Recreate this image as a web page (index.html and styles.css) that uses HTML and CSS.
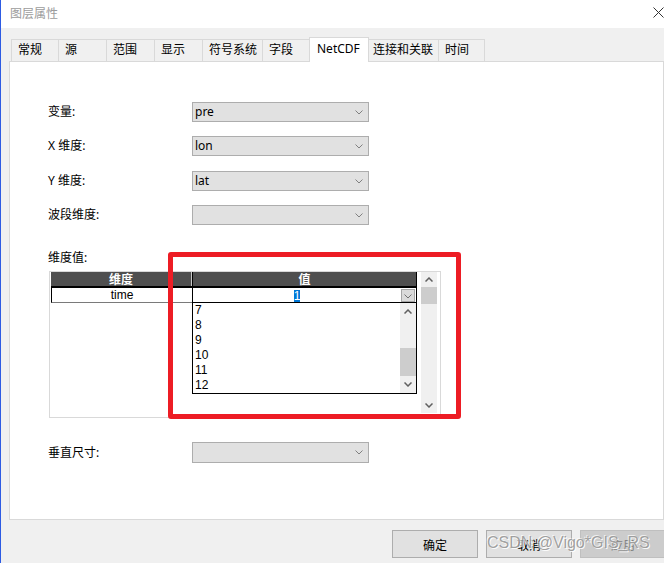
FILE: index.html
```html
<!DOCTYPE html>
<html lang="zh-CN">
<head>
<meta charset="utf-8">
<title>图层属性</title>
<link rel="stylesheet" href="styles.css">
</head>
<body>
<div class="window">
  <div class="titlebar">
    <span class="title">图层属性</span>
    <svg class="close" viewBox="0 0 12 11" width="12" height="11"><path d="M0.5 0.5 L10.5 10.5 M10.5 0.5 L0.5 10.5" stroke="#333" stroke-width="1" fill="none"/></svg>
  </div>

  <div class="tabs">
    <div class="tab tab-first w48">常规</div>
    <div class="tab w49">源</div>
    <div class="tab w49">范围</div>
    <div class="tab w49">显示</div>
    <div class="tab w61">符号系统</div>
    <div class="tab w48">字段</div>
    <div class="tab tab-active w60">NetCDF</div>
    <div class="tab tab-tight w71">连接和关联</div>
    <div class="tab w47">时间</div>
  </div>

  <div class="panel">
    <div class="row">
      <label class="lbl">变量:</label>
      <div class="select"><span class="val">pre</span><svg class="chev" viewBox="0 0 8 5" width="8" height="5"><polyline points="0.5,0.5 4,4 7.5,0.5" fill="none" stroke="#808080" stroke-width="1"/></svg></div>
    </div>
    <div class="row row-wide">
      <label class="lbl">X 维度:</label>
      <div class="select"><span class="val">lon</span><svg class="chev" viewBox="0 0 8 5" width="8" height="5"><polyline points="0.5,0.5 4,4 7.5,0.5" fill="none" stroke="#808080" stroke-width="1"/></svg></div>
    </div>
    <div class="row">
      <label class="lbl">Y 维度:</label>
      <div class="select"><span class="val">lat</span><svg class="chev" viewBox="0 0 8 5" width="8" height="5"><polyline points="0.5,0.5 4,4 7.5,0.5" fill="none" stroke="#808080" stroke-width="1"/></svg></div>
    </div>
    <div class="row">
      <label class="lbl">波段维度:</label>
      <div class="select"><span class="val"></span><svg class="chev" viewBox="0 0 8 5" width="8" height="5"><polyline points="0.5,0.5 4,4 7.5,0.5" fill="none" stroke="#808080" stroke-width="1"/></svg></div>
    </div>

    <div class="dimlabel">维度值:</div>
    <div class="dimbox">
      <div class="grid">
        <div class="head">
          <div class="hc1">维度</div>
          <div class="hc2">值</div>
        </div>
        <div class="hline"></div>
        <div class="datarow">
          <div class="dc1">time</div>
          <div class="dc2">
            <span class="cellval"><span class="hl">1</span></span>
            <span class="ddbtn"><svg viewBox="0 0 8 5" width="8" height="5"><polyline points="0.5,0.5 4,4 7.5,0.5" fill="none" stroke="#707070" stroke-width="1"/></svg></span>
          </div>
        </div>
      </div>
      <div class="vscroll">
        <div class="sarrow"><svg viewBox="0 0 8 5" width="8" height="5"><polyline points="0.5,4.5 4,1 7.5,4.5" fill="none" stroke="#606060" stroke-width="1.5"/></svg></div>
        <div class="sthumb outer-thumb"></div>
        <div class="strack"></div>
        <div class="sarrow"><svg viewBox="0 0 8 5" width="8" height="5"><polyline points="0.5,0.5 4,4 7.5,0.5" fill="none" stroke="#606060" stroke-width="1.5"/></svg></div>
      </div>

      <div class="dropdown">
        <ul class="items">
          <li>7</li>
          <li>8</li>
          <li>9</li>
          <li>10</li>
          <li>11</li>
          <li>12</li>
        </ul>
        <div class="lscroll">
          <div class="larrow"><svg viewBox="0 0 8 5" width="8" height="5"><polyline points="0.5,4.5 4,1 7.5,4.5" fill="none" stroke="#606060" stroke-width="1.5"/></svg></div>
          <div class="ltrack"><div class="lthumb"></div></div>
          <div class="larrow"><svg viewBox="0 0 8 5" width="8" height="5"><polyline points="0.5,0.5 4,4 7.5,0.5" fill="none" stroke="#606060" stroke-width="1.5"/></svg></div>
        </div>
      </div>
    </div>

    <div class="row row-vert">
      <label class="lbl">垂直尺寸:</label>
      <div class="select"><span class="val"></span><svg class="chev" viewBox="0 0 8 5" width="8" height="5"><polyline points="0.5,0.5 4,4 7.5,0.5" fill="none" stroke="#808080" stroke-width="1"/></svg></div>
    </div>
  </div>

  <div class="buttons">
    <button class="btn">确定</button>
    <button class="btn">取消</button>
    <button class="btn btn-disabled">应用</button>
  </div>

  <div class="watermark">CSDN @Vigo*GIS_RS</div>
  <div class="annot"></div>
</div>
</body>
</html>
```

FILE: styles.css
```css
html, body {
  margin: 0;
  padding: 0;
}
body {
  width: 664px;
  height: 563px;
  overflow: hidden;
  background: #f0f0f0;
  font-family: "Noto Sans", "Noto Sans CJK SC", sans-serif;
  font-size: 12px;
  color: #000;
}
.window {
  position: relative;
  height: 563px;
  border-left: 1px solid #2d5be3;
}

/* title bar */
.titlebar {
  height: 28px;
  background: #fff;
  display: flex;
  align-items: center;
  justify-content: space-between;
  padding-left: 9px;
}
.title {
  color: #9c9c9c;
  line-height: 16px;
}
.close {
  align-self: flex-start;
  margin-top: 7px;
  margin-right: -1px;
}

/* tabs */
.tabs {
  display: flex;
  align-items: flex-start;
  height: 25px;
  margin: 9px 0 -1px 10px;
}
.tab {
  box-sizing: border-box;
  height: 22px;
  margin-top: 2px;
  margin-left: -1px;
  border: 1px solid #d9d9d9;
  border-bottom: none;
  background: #f0f0f0;
  padding-left: 6px;
  line-height: 20px;
  white-space: nowrap;
}
.tab-first { margin-left: 0; }
.tab-tight { padding-left: 4px; }
.tab-active {
  position: relative;
  z-index: 1;
  height: 25px;
  margin-top: 0;
  background: #fff;
  padding-left: 7px;
  line-height: 22px;
}
.w47 { width: 47px; }
.w48 { width: 48px; }
.w49 { width: 49px; }
.w60 { width: 60px; }
.w61 { width: 61px; }
.w71 { width: 71px; }

/* panel */
.panel {
  box-sizing: border-box;
  width: 655px;
  height: 459px;
  margin-left: 8px;
  background: #fff;
  border: 1px solid #d9d9d9;
  padding: 40px 0 0 38px;
}
.row {
  display: flex;
  align-items: center;
  height: 20px;
  margin-bottom: 14px;
}
.row-wide {
  margin-bottom: 15px;
}
.lbl {
  width: 144px;
  line-height: 16px;
}
.select {
  box-sizing: border-box;
  width: 177px;
  height: 20px;
  background: #e1e1e1;
  border: 1px solid #adadad;
  display: flex;
  align-items: center;
  justify-content: space-between;
  padding: 0 5px 0 2px;
}
.val {
  line-height: 16px;
}
.chev {
  display: block;
}
.row-vert {
  margin-top: 24px;
  height: 21px;
}
.row-vert .select {
  height: 21px;
}

.dimlabel {
  margin-top: 25px;
  line-height: 16px;
}
.dimbox {
  position: relative;
  box-sizing: border-box;
  width: 392px;
  height: 147px;
  margin: 5px 0 0 1px;
  border: 1px solid #d9d9d9;
  padding-left: 1px;
  display: flex;
  align-items: flex-start;
}
.grid {
  width: 366px;
  font-family: "Liberation Sans", "Noto Sans CJK SC", sans-serif;
}
.head {
  display: flex;
  height: 14px;
  background: #4f4f4f;
  color: #fff;
  font-weight: bold;
  line-height: 14px;
  font-family: "Noto Sans CJK SC", sans-serif;
}
.hc1 {
  box-sizing: border-box;
  width: 141px;
  border-right: 1px solid #c8c8c8;
  text-align: center;
}
.hc2 {
  box-sizing: border-box;
  width: 225px;
  border-left: 1px solid #000;
  border-right: 1px solid #000;
  text-align: center;
}
.hline {
  height: 2px;
  background: #000;
}
.datarow {
  display: flex;
  height: 15px;
}
.dc1 {
  box-sizing: border-box;
  width: 141px;
  height: 15px;
  border-left: 1px solid #000;
  border-bottom: 1px solid #7a7a7a;
  text-align: center;
  line-height: 14px;
}
.dc2 {
  box-sizing: border-box;
  width: 225px;
  height: 15px;
  border-left: 1px solid #000;
  border-right: 1px solid #000;
  display: flex;
  align-items: flex-start;
}
.cellval {
  flex: 1;
  text-align: center;
  padding-top: 1px;
}
.hl {
  display: inline-block;
  background: #0078d7;
  color: #fff;
  line-height: 13px;
}
.ddbtn {
  box-sizing: border-box;
  width: 14px;
  height: 13px;
  margin: 1px 1px 0 0;
  background: #dadada;
  border: 1px solid #a6a6a6;
  display: flex;
  align-items: center;
  justify-content: center;
  padding-top: 2px;
}
.ddbtn svg { display: block; }

.vscroll {
  width: 16px;
  height: 141px;
  margin-left: 4px;
  background: #f0f0f0;
  display: flex;
  flex-direction: column;
}
.sarrow {
  height: 15px;
  display: flex;
  align-items: center;
  justify-content: center;
}
.sarrow svg, .larrow svg { display: block; }
.outer-thumb {
  height: 17px;
  background: #cdcdcd;
}
.strack { flex: 1; }

.dropdown {
  position: absolute;
  left: 142px;
  top: 30px;
  box-sizing: border-box;
  width: 225px;
  height: 92px;
  border: 1px solid #000;
  background: #fff;
  display: flex;
}
.items {
  flex: 1;
  list-style: none;
  margin: 0;
  padding: 0 0 0 2px;
  font-family: "Liberation Sans", sans-serif;
  font-size: 12px;
  line-height: 15px;
  color: #000;
}
.lscroll {
  width: 16px;
  background: #f0f0f0;
  display: flex;
  flex-direction: column;
}
.larrow {
  height: 17px;
  display: flex;
  align-items: center;
  justify-content: center;
}
.ltrack {
  flex: 1;
  display: flex;
  flex-direction: column;
  justify-content: flex-end;
}
.lthumb {
  height: 28px;
  background: #cdcdcd;
}

/* buttons */
.buttons {
  display: flex;
  justify-content: flex-end;
  gap: 8px;
  margin: 10px -2px 0 0;
}
.btn {
  box-sizing: border-box;
  width: 86px;
  height: 28px;
  background: #e1e1e1;
  border: 1px solid #adadad;
  font-family: "Noto Sans CJK SC", sans-serif;
  font-size: 12px;
  color: #000;
  padding: 0;
}
.btn-disabled {
  background: #cccccc;
  border-color: #bfbfbf;
  color: #838383;
}

/* overlays */
.watermark {
  position: absolute;
  left: 486px;
  top: 533px;
  font-family: "Liberation Sans", sans-serif;
  font-size: 16px;
  line-height: 20px;
  color: rgba(150, 150, 150, 0.9);
  text-shadow: 1px 1px 0 rgba(255, 255, 255, 0.9), -1px -1px 0 rgba(255, 255, 255, 0.7);
  white-space: nowrap;
}
.annot {
  position: absolute;
  left: 167px;
  top: 252px;
  box-sizing: border-box;
  width: 293px;
  height: 167px;
  border: 5px solid #ed1c24;
  border-radius: 3px;
}
```
